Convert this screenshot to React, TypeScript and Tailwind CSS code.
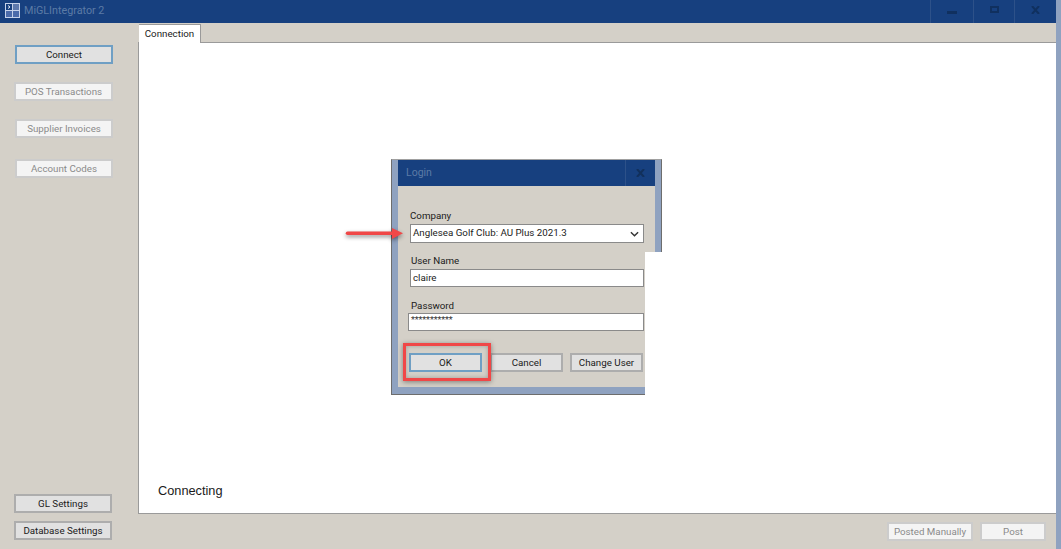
// App.tsx
const sideBtn = "flex items-center justify-center border-2 pt-px text-[9.75px] leading-none";
const enabledBtn = "border-[#adadad] bg-[#e1e1e1] text-[#1a1a1a]";
const disabledBtn = "border-[#cccccc] bg-[#f4f4f4] text-[#8a8a8a]";
const focusBtn = "border-[#6f9fc4] bg-[#e1e1e1] text-[#1a1a1a]";

function LoginDialog() {
  return (
    <div className="absolute left-[391px] top-[159px] h-[236px] w-[271px] border border-[#6d6d6d] border-t-[#a0a0a0] bg-[#8fa2c0] pl-[6px] pr-[6px]">
      <div className="flex h-[26px] items-center justify-between bg-[#17407f]">
        <span className="pl-2 text-[10.5px] text-[#5c7ba6]">Login</span>
        <div className="flex h-full w-[30px] items-center justify-center border-l border-[#2d5189]">
          <svg width="9" height="8" viewBox="0 0 9 8" fill="none" stroke="#12305c" strokeWidth="2">
            <path d="M1 0l7 8M8 0l-7 8" />
          </svg>
        </div>
      </div>
      <div className="h-[201px] bg-[#d4d0c8] pl-[12px] text-[9.75px] text-[#1a1a1a]">
        <div className="pt-[23px] leading-[13px]">Company</div>
        <div className="mt-[2px] flex h-[19px] w-[234px] items-center justify-between border border-[#8a8a8a] bg-white pl-[2px] pr-1">
          <span>Anglesea Golf Club: AU Plus 2021.3</span>
          <svg width="9" height="6" viewBox="0 0 10 6" fill="none" stroke="#333333" strokeWidth="1.6">
            <path d="M1 1l4 4 4-4" />
          </svg>
        </div>
        <div className="pl-px pt-[11px] leading-[13px]">User Name</div>
        <div className="mt-[2px] flex h-[18px] w-[234px] items-center border border-[#8a8a8a] bg-white pl-[2px] pt-px">claire</div>
        <div className="pl-px pt-[12px] leading-[13px]">Password</div>
        <div className="-ml-[2px] mt-px flex h-[18px] w-[236px] items-center border border-[#8a8a8a] bg-white pb-[2px] pl-[2px] text-[9px] tracking-[-0.1px] text-[#333333]">
          ***********
        </div>
        <div className="-ml-px mt-[22px] flex">
          <button className={`${sideBtn} ${focusBtn} h-[19px] w-[73px]`}>OK</button>
          <button className={`${sideBtn} ${enabledBtn} ml-[8px] h-[19px] w-[73px]`}>Cancel</button>
          <button className={`${sideBtn} ${enabledBtn} ml-[7px] h-[19px] w-[73px]`}>Change User</button>
        </div>
      </div>
    </div>
  );
}

export default function App() {
  return (
    <div
      className="relative flex h-[549px] w-[1061px] overflow-hidden bg-[#8fa2c0]"
      style={{ fontFamily: 'Roboto, "Liberation Sans", Arial, sans-serif' }}
    >
      <div className="flex w-[1056px] flex-col bg-[#d4d0c8]">
        {/* Title bar */}
        <div className="flex h-[23px] shrink-0 items-stretch bg-[#17407f]">
          <svg className="ml-[5px] mt-[3px]" width="15" height="15" viewBox="0 0 15 15">
            <rect width="15" height="15" fill="#c5d2ea" />
            <rect x="1" y="1" width="6" height="6" fill="#17407f" />
            <rect x="8" y="1" width="6" height="6" fill="#5d79ad" />
            <rect x="1" y="8" width="6" height="6" fill="#4a6bab" />
            <rect x="8" y="8" width="6" height="6" fill="#4a6bab" />
            <path d="M3 2.5l2 1.5-2 1.5" stroke="#e8eef8" fill="none" />
          </svg>
          <span className="ml-1 self-center text-[10.75px] text-[#5c7ba6]">MiGLIntegrator 2</span>
          <div className="ml-auto flex">
            <div className="flex w-[43px] items-center justify-center border-l border-[#2d5189]">
              <div className="mt-[1px] h-[3px] w-[10px] bg-[#10305f]" />
            </div>
            <div className="flex w-[41px] items-center justify-center border-l border-[#2d5189]">
              <div className="mb-[5px] h-[7px] w-[9px] border-2 border-[#10305f]" />
            </div>
            <div className="flex w-[42px] items-center justify-center border-l border-[#2d5189]">
              <svg className="mb-[4px]" width="9" height="8" viewBox="0 0 9 8" fill="none" stroke="#10305f" strokeWidth="2">
                <path d="M1 0l7 8M8 0l-7 8" />
              </svg>
            </div>
          </div>
        </div>

        <div className="flex min-h-0 flex-1">
          {/* Left nav */}
          <div className="flex w-[138px] shrink-0 flex-col">
            <button className={`${sideBtn} ${focusBtn} ml-[15px] mt-[22px] h-[19px] w-[98px]`}>Connect</button>
            <button className={`${sideBtn} ${disabledBtn} ml-[14px] mt-[18px] h-[19px] w-[99px]`}>POS Transactions</button>
            <button className={`${sideBtn} ${disabledBtn} ml-[15px] mt-[18px] h-[19px] w-[98px]`}>Supplier Invoices</button>
            <button className={`${sideBtn} ${disabledBtn} ml-[15px] mt-[21px] h-[19px] w-[98px]`}>Account Codes</button>
            <button className={`${sideBtn} ${enabledBtn} ml-[14px] mt-auto h-[19px] w-[98px]`}>GL Settings</button>
            <button className={`${sideBtn} ${enabledBtn} ml-[14px] mb-[9px] mt-[8px] h-[19px] w-[98px]`}>Database Settings</button>
          </div>

          {/* Tabs + content */}
          <div className="flex min-w-0 flex-1 flex-col">
            <div className="flex h-[20px] shrink-0 items-end border-b border-[#9a9a9a]">
              <div className="relative z-10 -mb-px ml-px flex h-[19px] w-[62px] items-center justify-center border-r border-t border-[#9a9a9a] bg-white text-[9.75px] text-[#1a1a1a]">
                Connection
              </div>
            </div>
            <div
              className="flex h-[471px] flex-col justify-end border-b border-l border-[#9a9a9a] bg-white pb-[14px] pl-[19px] text-[12.75px] leading-[16px] text-[#1a1a1a]"
              style={{ fontFamily: '"Liberation Sans", Arial, sans-serif' }}
            >
              Connecting
            </div>
            <div className="flex flex-1 justify-end gap-[7px] pr-[10px] pt-[8px]">
              <button className={`${sideBtn} ${disabledBtn} h-[19px] w-[86px]`}>Posted Manually</button>
              <button className={`${sideBtn} ${disabledBtn} h-[19px] w-[66px]`}>Post</button>
            </div>
          </div>
        </div>
      </div>

      <LoginDialog />

      {/* the white cut-out over the dialog's lower right corner */}
      <div className="absolute left-[645px] top-[252px] h-[143px] w-[18px] bg-white" />

      {/* Annotations */}
      <svg className="absolute left-[344px] top-[224px] drop-shadow-[0_2px_2px_rgba(0,0,0,0.45)]" width="60" height="20" viewBox="0 0 60 20">
        <path d="M3.5 9.3h46" stroke="#f04747" strokeWidth="3.5" strokeLinecap="round" />
        <path d="M48 4l11 5.3-11 5.7z" fill="#f04747" />
      </svg>
      <div className="absolute left-[403px] top-[343px] h-[38px] w-[88px] border-[3px] border-[#f04747] shadow-[0_1px_5px_rgba(0,0,0,0.4),inset_0_0_4px_rgba(0,0,0,0.25)]" />
    </div>
  );
}
